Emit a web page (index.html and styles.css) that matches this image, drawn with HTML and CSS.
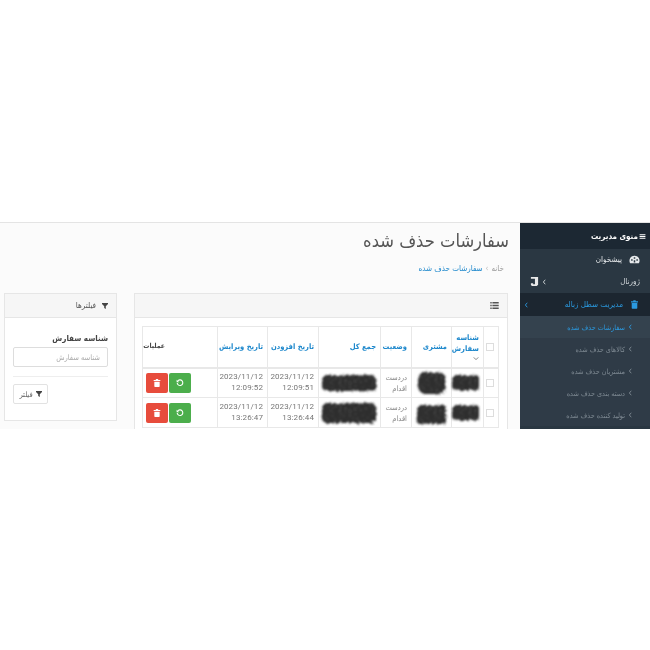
FILE: index.html
```html
<!DOCTYPE html>
<html lang="fa" dir="rtl">
<head>
<meta charset="utf-8">
<title>سفارشات حذف شده</title>
<link rel="stylesheet" href="styles.css">
</head>
<body>
<svg class="defs" width="0" height="0" aria-hidden="true"><defs><filter id="rough" x="-20%" y="-20%" width="140%" height="140%"><feTurbulence type="fractalNoise" baseFrequency="0.4" numOctaves="2" seed="4" result="n"/><feDisplacementMap in="SourceGraphic" in2="n" scale="5" result="d"/><feColorMatrix in="n" type="matrix" values="0 0 0 0 0  0 0 0 0 0  0 0 0 0 0  0 0 0 -1 1.600" result="speck"/><feComposite in="d" in2="speck" operator="in" result="t"/><feGaussianBlur in="t" stdDeviation="0.8"/></filter></defs></svg>
<div class="app">
  <aside class="side">
    <div class="side-head"><svg class="i10" viewBox="0 0 12 12"><path d="M1 2h10v2H1zM1 5h10v2H1zM1 8h10v2H1z"/></svg><span>منوی مدیریت</span></div>
    <div class="nav nav-first"><svg class="ico" viewBox="0 0 14 12"><path fill-rule="evenodd" d="M7 1a6.500 6.500 0 0 0-6 9.500 1 1 0 0 0 1 .5h10a1 1 0 0 0 1-.5A6.500 6.500 0 0 0 7 1zM6 3h2v2H6zM2.500 5.500h2v2h-2zM9.500 5.500h2v2h-2zM6 7h2v3H6z"/></svg><span>پیشخوان</span></div>
    <div class="nav nav-journal"><span>ژورنال</span><span class="spacer"></span><svg class="chev" viewBox="0 0 6 8"><path d="M4 1 1.500 4 4 7" fill="none" stroke="currentColor" stroke-width="1.200"/></svg><svg class="jlogo" viewBox="0 0 10 12"><path d="M1 1h8v8.500L7.500 11H2L1 9.500V8h2.500v1h2V3H1z"/></svg></div>
    <div class="nav nav-active"><svg class="ico-trash" viewBox="0 0 10 12"><path d="M3.500 0h3l.5 1.500h3V3H0V1.500h3zM1 4h8v7a1 1 0 0 1-1 1H2a1 1 0 0 1-1-1z"/></svg><span>مدیریت سطل زباله</span><span class="spacer"></span><svg class="chev" viewBox="0 0 6 8"><path d="M4 1 1.500 4 4 7" fill="none" stroke="currentColor" stroke-width="1.200"/></svg></div>
    <div class="sub sub-on"><svg class="chev" viewBox="0 0 6 8"><path d="M4 1 1.500 4 4 7" fill="none" stroke="currentColor" stroke-width="1.200"/></svg><span>سفارشات حذف شده</span></div>
    <div class="sub"><svg class="chev" viewBox="0 0 6 8"><path d="M4 1 1.500 4 4 7" fill="none" stroke="currentColor" stroke-width="1.200"/></svg><span>کالاهای حذف شده</span></div>
    <div class="sub"><svg class="chev" viewBox="0 0 6 8"><path d="M4 1 1.500 4 4 7" fill="none" stroke="currentColor" stroke-width="1.200"/></svg><span>مشتریان حذف شده</span></div>
    <div class="sub"><svg class="chev" viewBox="0 0 6 8"><path d="M4 1 1.500 4 4 7" fill="none" stroke="currentColor" stroke-width="1.200"/></svg><span>دسته بندی حذف شده</span></div>
    <div class="sub"><svg class="chev" viewBox="0 0 6 8"><path d="M4 1 1.500 4 4 7" fill="none" stroke="currentColor" stroke-width="1.200"/></svg><span>تولید کننده حذف شده</span></div>
  </aside>
  <main class="main">
    <h1>سفارشات حذف شده</h1>
    <div class="crumbs"><span class="muted">خانه</span><span class="sep">›</span><span class="link">سفارشات حذف شده</span></div>
    <div class="columns">
      <section class="panel panel-list">
        <div class="panel-head"><svg class="list-ico" viewBox="0 0 12 10"><path d="M0 0h2v2H0zM3 0h9v2H3zM0 4h2v2H0zM3 4h9v2H3zM0 8h2v2H0zM3 8h9v2H3z"/></svg></div>
        <div class="panel-body">
          <table>
            <colgroup><col class="c-check"><col class="c-id"><col class="c-cust"><col class="c-stat"><col class="c-total"><col class="c-date"><col class="c-date2"><col class="c-ops"></colgroup>
            <thead>
              <tr>
                <th><span class="box"></span></th>
                <th class="link">شناسه سفارش<svg class="down" viewBox="0 0 8 6"><path d="M1 1.500 4 4.500 7 1.500" fill="none" stroke="currentColor" stroke-width="1.200"/></svg></th>
                <th class="link">مشتری</th>
                <th class="link">وضعیت</th>
                <th class="link">جمع کل</th>
                <th class="link nowrap">تاریخ افزودن</th>
                <th class="link nowrap">تاریخ ویرایش</th>
                <th class="dark">عملیات</th>
              </tr>
            </thead>
            <tbody>
              <tr>
                <td><span class="box"></span></td>
                <td><div class="scrib s-id"></div></td>
                <td><div class="scrib s-cust"></div></td>
                <td class="status">دردست اقدام</td>
                <td><div class="scrib s-total"></div></td>
                <td class="date">2023/11/12<br>12:09:51</td>
                <td class="date">2023/11/12<br>12:09:52</td>
                <td class="ops-cell"><div class="ops"><button class="btn green"><svg viewBox="0 0 10 10"><path d="M2 2.800A3.500 3.500 0 1 1 1.500 5" fill="none" stroke="#fff" stroke-width="1.400"/><path d="M.8 1v3h3z" fill="#fff"/></svg></button><button class="btn red"><svg viewBox="0 0 10 12"><path fill="#fff" d="M3.500 0h3l.5 1.500h3V3H0V1.500h3zM1 4h8v7a1 1 0 0 1-1 1H2a1 1 0 0 1-1-1z"/></svg></button></div></td>
              </tr>
              <tr>
                <td><span class="box"></span></td>
                <td><div class="scrib s-id"></div></td>
                <td><div class="scrib s-cust2"></div></td>
                <td class="status">دردست اقدام</td>
                <td><div class="scrib s-total s-total2"></div></td>
                <td class="date">2023/11/12<br>13:26:44</td>
                <td class="date">2023/11/12<br>13:26:47</td>
                <td class="ops-cell"><div class="ops"><button class="btn green"><svg viewBox="0 0 10 10"><path d="M2 2.800A3.500 3.500 0 1 1 1.500 5" fill="none" stroke="#fff" stroke-width="1.400"/><path d="M.8 1v3h3z" fill="#fff"/></svg></button><button class="btn red"><svg viewBox="0 0 10 12"><path fill="#fff" d="M3.500 0h3l.5 1.500h3V3H0V1.500h3zM1 4h8v7a1 1 0 0 1-1 1H2a1 1 0 0 1-1-1z"/></svg></button></div></td>
              </tr>
            </tbody>
          </table>
        </div>
      </section>
      <section class="panel panel-filter">
        <div class="panel-head filter-head"><svg class="funnel" viewBox="0 0 10 10"><path d="M0 0h10v1.500L6.300 5.500V10L3.700 8.500v-3L0 1.500z"/></svg><span>فیلترها</span></div>
        <div class="filter-body">
          <label for="oid">شناسه سفارش</label>
          <input id="oid" placeholder="شناسه سفارش">
          <hr>
          <button class="filter-btn"><svg class="funnel" viewBox="0 0 10 10"><path d="M0 0h10v1.500L6.300 5.500V10L3.700 8.500v-3L0 1.500z"/></svg><span>فیلتر</span></button>
        </div>
      </section>
    </div>
  </main>
</div>
</body>
</html>
```

FILE: styles.css
```css
* { box-sizing: border-box; }
html, body { margin: 0; background: #fff; }
body { padding-top: 222px; height: 650px; overflow: hidden; font-family: "DejaVu Sans Condensed", "DejaVu Sans", sans-serif; font-size: 8px; color: #555; }
svg { display: block; fill: currentColor; }
.defs { position: absolute; }

.app { display: flex; height: 207px; overflow: hidden; background: #fbfbfb; border-top: 1px solid #e4e4e4; filter: blur(0.4px); }

.side { width: 130px; flex: none; background: #2a3742; color: #d5dadd; }
.side-head { height: 26px; background: #1c2833; color: #fff; display: flex; align-items: center; gap: 1px; padding-right: 4px; font-size: 8px; font-weight: bold; }
.i10 { width: 7px; height: 7px; }
.nav { display: flex; align-items: center; height: 22px; font-size: 8px; }
.nav-first { gap: 7px; padding-right: 10px; height: 21px; color: #e6e9eb; }
.ico { width: 11px; height: 9px; }
.nav-journal { padding: 0 10px 0 10px; height: 23px; }
.spacer { flex: 1; }
.chev { width: 5px; height: 6px; color: inherit; flex: none; }
.jlogo { width: 9px; height: 11px; color: #e8e8e8; margin-right: 3px; }
.nav-active { background: #1c2630; color: #2b9ae0; padding: 0 12px 0 4px; gap: 8px; height: 23px; font-size: 8px; }
.ico-trash { width: 7px; height: 9px; }
.sub { display: flex; align-items: center; gap: 3px; height: 22px; padding-right: 17px; font-size: 7.200px; color: #7f8a93; background: #2f3b47; }
.sub-on { color: #2b9ae0; background: #34424e; }

.main { flex: 1; min-width: 0; padding-left: 4px; padding-right: 11px; }
h1 { margin: 0; padding-top: 6px; font-size: 18.200px; line-height: 24px; font-weight: normal; color: #555; }
.crumbs { display: flex; gap: 3px; align-items: center; height: 14px; margin-top: 8px; padding-right: 5px; font-size: 8px; }
.muted { color: #999; }
.sep { color: #bbb; }
.link { color: #1e88cc; }

.columns { display: flex; gap: 17px; margin-top: 18px; padding-right: 1px; align-items: flex-start; }
.panel { background: #fff; border: 1px solid #e6e6e6; }
.panel-list { width: 374px; flex: none; height: 200px; }
.panel-filter { flex: 1; height: 128px; }
.panel-head { height: 24px; background: #f6f6f6; border-bottom: 1px solid #e6e6e6; display: flex; align-items: center; padding-right: 8px; }
.list-ico { width: 9px; height: 7px; color: #555; }

.panel-body { padding: 8px; }
table { width: 356px; table-layout: fixed; border-collapse: collapse; font-size: 7.500px; }
.c-check { width: 15px; }
.c-id { width: 32px; }
.c-cust { width: 40px; }
.c-stat { width: 31px; }
.c-total { width: 62px; }
.c-date { width: 51px; }
.c-date2 { width: 50px; }
.c-ops { width: 75px; }
th, td { border: 1px solid #e8e8e8; padding: 3px 4px; text-align: right; line-height: 11px; }
th { height: 41px; font-weight: bold; border-bottom-width: 2px; }
td { height: 30px; }
th.dark { color: #444; padding-right: 52px; font-size: 6.800px; white-space: nowrap; }
.nowrap { white-space: nowrap; }
.box { display: block; width: 8px; height: 8px; margin: auto; border: 1px solid #ddd; background: #fff; }
.down { width: 6px; height: 5px; margin-top: 2px; color: #777; }
.status { color: #888; font-weight: normal; }
.date { font-family: "Roboto", sans-serif; font-size: 8px; letter-spacing: .1px; line-height: 10.500px; color: #777; text-align: right; white-space: nowrap; }

.scrib { background: #2e2e2e; filter: url(#rough); }
.s-id { width: 27px; height: 15px; margin: 0 auto; border-radius: 4px; }
.s-cust { width: 28px; height: 22px; margin: 0 auto; border-radius: 8px; }
.s-cust2 { width: 29px; height: 19px; margin: 3px auto 0; border-radius: 3px; }
.s-total { width: 54px; height: 16px; margin: 0 auto; border-radius: 5px; }
.s-total2 { height: 20px; }

.ops-cell { padding: 0 2px 0 3px; }
.ops { display: flex; gap: 1px; justify-content: flex-end; }
.btn { width: 22px; height: 20px; border: 0; border-radius: 2px; padding: 0; display: flex; align-items: center; justify-content: center; }
.btn svg { width: 8px; height: 8px; }
.green { background: #4cae4c; }
.red { background: #e74c3c; }

.filter-head { gap: 6px; padding-right: 8px; font-size: 8px; color: #555; }
.funnel { width: 6px; height: 6px; color: #444; flex: none; }
.filter-body { padding: 16px 8px 0; }
label { display: block; font-size: 8px; font-weight: bold; color: #444; line-height: 10px; }
input { display: block; width: 95px; height: 20px; margin-top: 3px; border: 1px solid #ddd; border-radius: 2px; padding: 0 7px; font: 7.500px "DejaVu Sans Condensed", "DejaVu Sans", sans-serif; background: #fff; }
input::placeholder { color: #aaa; }
hr { border: 0; border-top: 1px solid #eee; margin: 9px 0 7px; }
.filter-btn { width: 35px; height: 20px; margin-right: 60px; display: flex; align-items: center; justify-content: center; gap: 3px; border: 1px solid #e2e2e2; border-radius: 2px; background: #fff; padding: 0; font: 7.500px "DejaVu Sans Condensed", "DejaVu Sans", sans-serif; color: #666; }
```
